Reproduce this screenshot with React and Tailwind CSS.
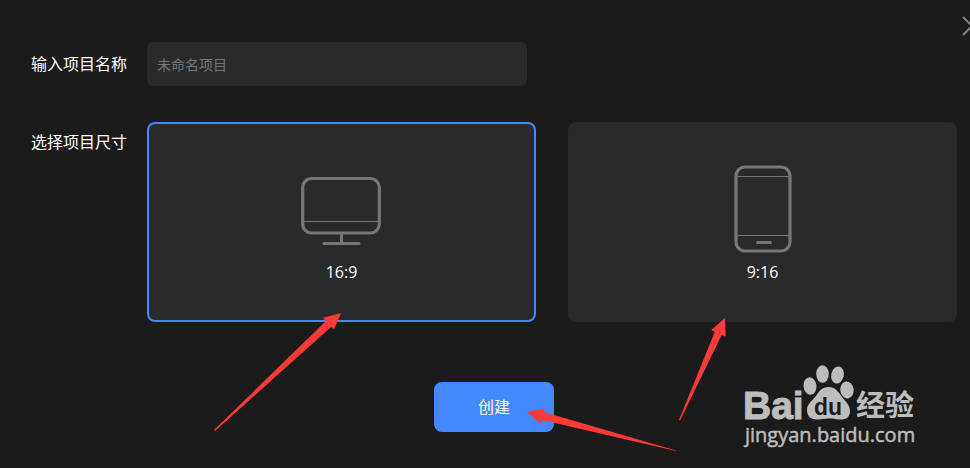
import { useState } from 'react';

const LABEL = 'w-24 shrink-0 text-base text-white whitespace-nowrap';

function MonitorIcon() {
  return (
    <svg width="82" height="88" viewBox="0 0 82 88" fill="none" stroke="#76767b" aria-hidden="true">
      <rect x="1.7" y="13.5" width="76.6" height="54.5" rx="9" strokeWidth="3.2" />
      <path d="M2 56.5H78" strokeWidth="1" />
      <path d="M40.5 69V78" strokeWidth="3" />
      <path d="M23 78.5H58" strokeWidth="3" strokeLinecap="round" />
    </svg>
  );
}

function PhoneIcon() {
  return (
    <svg width="58" height="88" viewBox="0 0 58 88" fill="none" stroke="#76767b" aria-hidden="true">
      <rect x="2" y="2" width="54" height="84" rx="9" strokeWidth="3.2" />
      <path d="M2 11.5H56M2 70.5H56" strokeWidth="1" />
      <path d="M23.5 77.5H36.5" strokeWidth="3" strokeLinecap="round" />
    </svg>
  );
}

const SIZES = [
  { value: '16:9', Icon: MonitorIcon },
  { value: '9:16', Icon: PhoneIcon },
];

function Arrows() {
  return (
    <svg width="970" height="468" className="absolute top-0 left-0 pointer-events-none" fill="#ff3838" aria-hidden="true">
      <path d="M341 313L323.3 317.7L325.7 321.3L214 430L215 431L331 327L334 329.3Z" />
      <path d="M527 412L545 408L543.7 412L676 450.4L676 451L542 420L540.7 424Z" />
      <path d="M725 318L711.3 330L714.7 332L679 420L680 420.6L721.7 335L725.7 336.7Z" />
    </svg>
  );
}

function Watermark() {
  return (
    <svg width="180" height="90" viewBox="0 0 180 90" className="absolute right-12 bottom-4 pointer-events-none" fill="#bdbdbd">
      <text x="1" y="57" className="font-['Liberation_Sans',sans-serif] text-[39px] font-bold" stroke="#bdbdbd" strokeWidth="1">Bai</text>
      <ellipse cx="68" cy="24" rx="6.5" ry="8.7" transform="rotate(-8 68 24)" />
      <ellipse cx="80.5" cy="12" rx="6.3" ry="8.7" />
      <ellipse cx="95.5" cy="13" rx="6.3" ry="8.7" transform="rotate(12 95.5 13)" />
      <ellipse cx="105" cy="28" rx="6.7" ry="8.5" transform="rotate(-8 105 28)" />
      <path d="M86.5 25C93 25 97 30 100 35C104 40 108 43 108 49C108 56 103 58 97 57.5C93 57 90 56.5 86.5 56.5C83 56.5 80 57.5 76 57.5C69 58 65 54 65 48C65 42 70 39 74 34C77 29 80 25 86.5 25Z" />
      <text x="72" y="53" fill="#1b1b1b" className="font-['Liberation_Sans',sans-serif] text-[23px] font-bold">du</text>
      <text x="114" y="54" className="font-['Noto_Sans_CJK_SC',sans-serif] text-[29px] font-bold">经验</text>
      <text x="3" y="80" className="font-['Open_Sans','Noto_Sans',sans-serif] text-[20px]" stroke="#bdbdbd" strokeWidth="0.5">jingyan.baidu.com</text>
    </svg>
  );
}

export default function App() {
  const [name, setName] = useState('');
  const [size, setSize] = useState('16:9');

  return (
    <main className="relative min-h-screen overflow-hidden bg-[#1b1b1b] font-['Open_Sans','Noto_Sans_CJK_SC',sans-serif]">
      <button type="button" aria-label="关闭" className="absolute top-4 -right-3 text-[#808080]">
        <svg width="20" height="20" viewBox="0 0 20 20" fill="none" stroke="currentColor" strokeWidth="2">
          <path d="M1 1L19 19M19 1L1 19" />
        </svg>
      </button>

      <form onSubmit={(e) => e.preventDefault()} className="flex flex-col pt-[42px] pr-[13px] pb-9 pl-[31px]">
        <div className="flex items-center gap-5">
          <label htmlFor="name" className={LABEL}>输入项目名称</label>
          <input
            id="name"
            value={name}
            onChange={(e) => setName(e.target.value)}
            placeholder="未命名项目"
            className="h-11 w-[380px] rounded-md bg-[#2a2a2a] px-2.5 text-sm text-white placeholder:text-[#757575] focus:outline-none"
          />
        </div>

        <div className="mt-9 flex gap-5" role="radiogroup" aria-labelledby="size-label">
          <span id="size-label" className={LABEL + ' leading-10'}>选择项目尺寸</span>
          <div className="grid flex-1 grid-cols-2 gap-8">
            {SIZES.map(({ value, Icon }) => (
              <label
                key={value}
                className={`flex h-[200px] cursor-pointer flex-col items-center gap-[7px] rounded-lg border-2 bg-[#2a2a2a] pt-[41px] ${
                  size === value ? 'border-[#4388ff]' : 'border-[#2a2a2a]'
                }`}
              >
                <input
                  type="radio"
                  name="size"
                  value={value}
                  checked={size === value}
                  onChange={() => setSize(value)}
                  className="sr-only"
                />
                <Icon />
                <span className="text-base text-white">{value}</span>
              </label>
            ))}
          </div>
        </div>

        <button type="submit" className="mt-[60px] h-[50px] w-[120px] self-center rounded-lg bg-[#4388ff] text-base text-white">
          创建
        </button>
      </form>

      <Watermark />
      <Arrows />
    </main>
  );
}
